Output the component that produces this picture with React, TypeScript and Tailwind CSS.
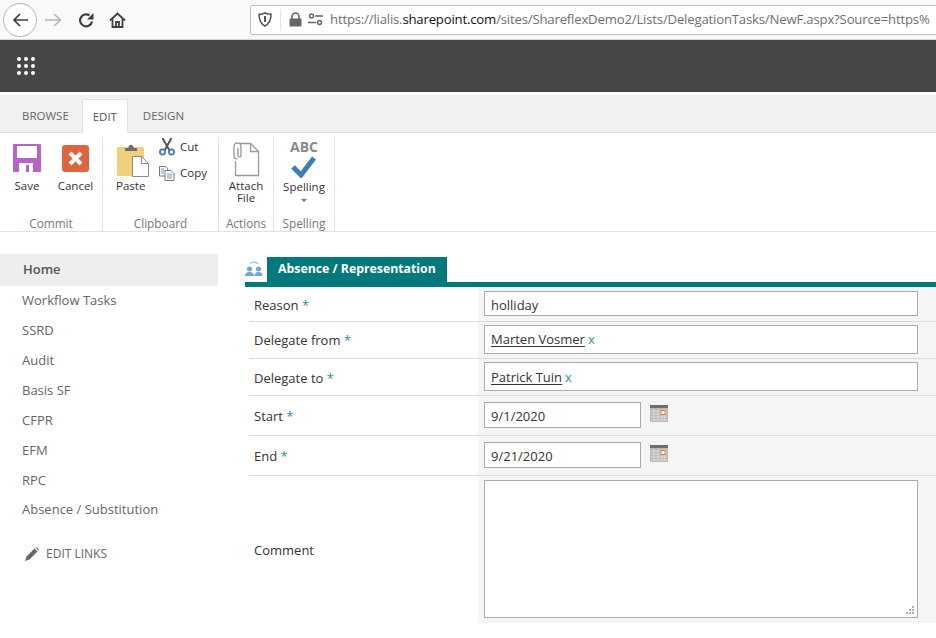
import React from "react";

const font = { fontFamily: '"Open Sans", "Noto Sans", sans-serif' };

function Back() {
  return (
    <svg className="shrink-0" width="17" height="16" viewBox="0 0 17 16" fill="none" stroke="#3c3c3c" strokeWidth="1.7">
      <path d="M16 8H2M8 2 2 8l6 6" />
    </svg>
  );
}

function Toolbar() {
  return (
    <div className="h-10 shrink-0 flex items-center bg-[#f9f9f9] border-b border-[#d8d8d8] overflow-hidden">
      <div className="ml-[3px] w-[34px] h-[34px] shrink-0 rounded-full border border-[#b4b4b4] bg-white flex items-center justify-center">
        <Back />
      </div>
      <svg className="ml-[8px] shrink-0" width="17" height="16" viewBox="0 0 17 16" fill="none" stroke="#b5b5b5" strokeWidth="1.5">
        <path d="M0 8h15.500M9 2l6.500 6-6.500 6" />
      </svg>
      <svg className="ml-[16px] shrink-0" width="16" height="16" viewBox="0 0 16 16" fill="none" stroke="#3f3f3f" strokeWidth="2.200">
        <path d="M14 9.500A6 6 0 1 1 11.500 3.400" />
        <path d="M15.500 1v6.500H9z" fill="#3f3f3f" stroke="none" />
      </svg>
      <svg className="ml-[15px] shrink-0" width="17" height="16" viewBox="0 0 17 16" fill="none" stroke="#3f3f3f" strokeWidth="1.800">
        <path d="M1 8.500 8.500 1.500 16 8.500" />
        <path d="M3.500 7v8h10V7" />
        <path d="M7 15v-5h3v5" />
      </svg>
      <div className="ml-[124px] w-[700px] h-[30px] bg-white border border-[#bdbdbd] rounded-l-[2px] flex items-center shrink-0 overflow-hidden">
        <svg className="ml-[7px] shrink-0" width="14" height="15" viewBox="0 0 14 15" fill="none" stroke="#555" strokeWidth="1.600">
          <path d="M7 1c2 1 4 1.300 6 1.300C13 8 11 12 7 14 3 12 1 8 1 2.300 3 2.300 5 2 7 1z" />
          <path d="M7 4v6" strokeWidth="2" />
        </svg>
        <div className="ml-[8px] w-px h-[22px] shrink-0 bg-[#e4e4e4]" />
        <svg className="ml-[8px] shrink-0" width="13" height="15" viewBox="0 0 13 15">
          <path d="M3 7V4.500a3.500 3.500 0 0 1 7 0V7" fill="none" stroke="#666" strokeWidth="1.600" />
          <rect x="0.500" y="6.500" width="12" height="8" rx="1" fill="#666" />
        </svg>
        <svg className="ml-[6px] shrink-0" width="15" height="13" viewBox="0 0 15 13" fill="none" stroke="#666" strokeWidth="1.500">
          <circle cx="3.500" cy="3" r="2" />
          <path d="M7 3h8M0 9.500h8" />
          <circle cx="11.500" cy="9.500" r="2" />
        </svg>
        <div className="ml-[7px] whitespace-nowrap text-[13.200px] tracking-[-0.2px] text-[#6f6f6f]">
          https://lialis.<span className="text-[#111]">sharepoint.com</span>/sites/ShareflexDemo2/Lists/DelegationTasks/NewF.aspx?Source=https%
        </div>
      </div>
    </div>
  );
}

function Header() {
  return (
    <div className="h-[52px] shrink-0 bg-[#484644] flex items-center pl-[17px]">
      <div className="grid grid-cols-3 gap-[3px]">
        {Array.from({ length: 9 }).map((_, i) => (
          <div key={i} className="w-[4px] h-[4px] rounded-full bg-white" />
        ))}
      </div>
    </div>
  );
}

function SaveIcon() {
  return (
    <svg className="shrink-0" width="28" height="28" viewBox="0 0 28 28">
      <rect width="28" height="28" rx="1" fill="#b565c9" />
      <path d="M4 2h20v12H4z" fill="#fff" />
      <path d="M6 19h14v9H6z" fill="#fff" />
      <path d="M13 21h3v7h-3z" fill="#b565c9" />
    </svg>
  );
}
function CancelIcon() {
  return (
    <svg className="shrink-0" width="27" height="27" viewBox="0 0 27 27">
      <rect width="27" height="27" rx="3" fill="#dc6540" />
      <path d="M8 8l11 11M19 8 8 19" stroke="#fff" strokeWidth="4" />
    </svg>
  );
}
function PasteIcon() {
  return (
    <svg className="shrink-0" width="32" height="34" viewBox="0 0 32 34">
      <rect x="0" y="4" width="27" height="29" rx="1.500" fill="#f0cf7d" />
      <path d="M8 8V5h3.500a2.500 2.500 0 0 1 4.500-2 2.500 2.500 0 0 1 .5 2H20v3z" fill="#6e6e6e" />
      <path d="M15.500 13.500h9l7 7v13h-16z" fill="#fff" stroke="#8a8a8a" />
      <path d="M24.500 13.500v7h7" fill="none" stroke="#8a8a8a" />
    </svg>
  );
}
function CutIcon() {
  return (
    <svg className="shrink-0" width="16" height="18" viewBox="0 0 16 18" fill="none">
      <path d="M3.500 0l7 12.500M12.500 0l-7 12.500" stroke="#555" strokeWidth="2" />
      <circle cx="3.500" cy="14" r="2.600" stroke="#3f78b5" strokeWidth="1.700" />
      <circle cx="12.500" cy="14" r="2.600" stroke="#3f78b5" strokeWidth="1.700" />
    </svg>
  );
}
function CopyIcon() {
  return (
    <svg className="shrink-0" width="16" height="16" viewBox="0 0 16 16" fill="#fff" stroke="#6a6a6a" strokeWidth="0.900">
      <path d="M.5 1.500h6l2 2V11h-8z" />
      <path d="M6 5.500h6l3 3v7H6z" />
      <path d="M8 9h5M8 11h5M8 13h5M2 4h3M2 6h3M2 8h3" stroke="#5f8fbf" />
    </svg>
  );
}
function AttachIcon() {
  return (
    <svg className="shrink-0" width="27" height="35" viewBox="0 0 27 35" fill="none">
      <path d="M2.500 4V1.500h15l8 8v24h-23V19" fill="#fff" stroke="#9a9a9a" strokeWidth="1.300" />
      <path d="M17.500 1.500v8h8" stroke="#9a9a9a" strokeWidth="1.300" />
      <path d="M4.500 17c-2.500 0-3.500-1-3.500-3V5c0-3 1.500-4 3.500-4S8 2 8 5v8.500c0 1-.6 1.500-1.400 1.500S5 14.500 5 13.500V6" stroke="#8d8d8d" strokeWidth="1.200" fill="#fff" />
    </svg>
  );
}
function CheckIcon() {
  return (
    <svg className="shrink-0" width="26" height="23" viewBox="0 0 26 23">
      <path d="M2 12l8 8L23 3" fill="none" stroke="#3e7cb4" strokeWidth="5" />
    </svg>
  );
}

function Group({ label, width, children }: { label: string; width: string; children: React.ReactNode }) {
  return (
    <div className={`${width} h-[94px] mt-[4px] border-r border-[#e1e1e1] flex flex-col shrink-0`}>
      <div className="h-[78px] relative flex">{children}</div>
      <div className="text-center text-[11.800px] leading-[16px] text-[#777] whitespace-nowrap">{label}</div>
    </div>
  );
}

function Ribbon() {
  return (
    <div className="shrink-0">
      <div className="h-[38px] mt-[3px] bg-[#f1f1f1] flex items-end border-b border-[#e1e1e1] text-[11.500px] text-[#666]">
        <div className="ml-[22px] h-[33px] flex items-center">BROWSE</div>
        <div className="ml-[13px] w-[46px] h-[34px] -mb-px bg-white border border-b-0 border-[#e1e1e1] flex items-center justify-center text-[#555]">EDIT</div>
        <div className="ml-[15px] h-[33px] flex items-center">DESIGN</div>
      </div>
      <div className="h-[99px] border-b border-[#e1e1e1] flex text-[11.500px] leading-[12px] text-[#333]">
        <Group label="Commit" width="w-[103px]">
          <div className="ml-[13px] mt-[7px] flex flex-col items-center w-[28px]">
            <SaveIcon />
            <div className="mt-[8px]">Save</div>
          </div>
          <div className="ml-[21px] mt-[8px] flex flex-col items-center w-[27px]">
            <CancelIcon />
            <div className="mt-[8px]">Cancel</div>
          </div>
        </Group>
        <Group label="Clipboard" width="w-[116px]">
          <div className="ml-[14px] mt-[6px] flex flex-col items-start w-[32px]">
            <PasteIcon />
            <div className="mt-[3px] whitespace-nowrap -ml-px">Paste</div>
          </div>
          <div className="ml-[10px] mt-[1px] flex flex-col gap-[9px]">
            <div className="flex items-center gap-[5px] h-[18px]"><CutIcon /><span>Cut</span></div>
            <div className="flex items-center gap-[5px] h-[16px]"><CopyIcon /><span>Copy</span></div>
          </div>
        </Group>
        <Group label="Actions" width="w-[55px]">
          <div className="w-full mt-[5px] flex flex-col items-center">
            <AttachIcon />
            <div className="mt-[3px] text-center">Attach<br />File</div>
          </div>
        </Group>
        <Group label="Spelling" width="w-[61px]">
          <div className="w-full flex flex-col items-center">
            <div className="mt-[2px] text-[14px] leading-[16px] font-bold text-[#8a8a8a]">ABC</div>
            <CheckIcon />
            <div className="mt-[3px]">Spelling</div>
            <div className="mt-[6px] w-0 h-0 border-x-[3px] border-x-transparent border-t-[3px] border-t-[#777]" />
          </div>
        </Group>
      </div>
    </div>
  );
}

const navItems = ["Workflow Tasks", "SSRD", "Audit", "Basis SF", "CFPR", "EFM", "RPC", "Absence / Substitution"];

function Sidebar() {
  return (
    <div className="w-[218px] shrink-0 pt-[22px] text-[13px] text-[#666]">
      <div className="h-[32px] bg-[#eeeeee] pl-[23px] flex items-center font-semibold text-[#555]">Home</div>
      {navItems.map((n) => (
        <div key={n} className="h-[29.900px] pl-[22px] flex items-center whitespace-nowrap">{n}</div>
      ))}
      <div className="mt-[14px] h-[30px] pl-[25px] flex items-center gap-[7px] text-[12px]">
        <svg className="shrink-0" width="14" height="14" viewBox="0 0 14 14">
          <path d="M0 14l1.500-4.500 8-8 3 3-8 8z" fill="#666" />
          <path d="M10.500.5l1-.5 2.500 2.500-.5 1z" fill="#666" />
        </svg>
        EDIT LINKS
      </div>
    </div>
  );
}

function Req() {
  return <span className="text-[#2a8f98]"> *</span>;
}

function Row({ label, h, labelPad, children }: { label: string; h: string; labelPad: string; children: React.ReactNode }) {
  return (
    <div className={`flex ${h}`}>
      <div className="w-[233px] pl-[4px] shrink-0">
        <div className={`h-full pl-[5px] flex items-center border-b border-[#dcdcdc] text-[13px] text-[#333] ${labelPad}`}>
          <span>{label}<Req /></span>
        </div>
      </div>
      <div className="flex-1 bg-[#f5f5f5] border-b border-[#dcdcdc] pl-[6px]">{children}</div>
    </div>
  );
}

function Box({ className, children }: { className: string; children?: React.ReactNode }) {
  return (
    <div className={`bg-white border border-[#ababab] pl-[6px] flex items-center text-[13px] text-[#333] ${className}`}>
      {children}
    </div>
  );
}

function Person({ name }: { name: string }) {
  return (
    <>
      <span className="underline underline-offset-2">{name}</span>
      <span className="ml-[3px] text-[#3b8f8f]">x</span>
    </>
  );
}

function Calendar() {
  return (
    <svg className="ml-[9px] mt-[3px] shrink-0" width="18" height="17" viewBox="0 0 18 17">
      <rect width="18" height="17" rx="1" fill="#b8b8b8" />
      <rect width="18" height="3" fill="#6e6e6e" />
      <path d="M1 6h16M1 9h16M1 12h16M1 15h16M4 4v12M8 4v12M12 4v12M15 4v12" stroke="#e4e4e4" strokeWidth="0.800" />
      <rect x="11" y="5.500" width="4" height="4" fill="#fff" stroke="#e5792a" />
    </svg>
  );
}

function Form() {
  return (
    <div className="flex-1 min-w-0 pt-[24px]">
      <div className="flex items-end h-[26px]">
        <svg className="mb-[6px] mr-[4px] shrink-0" width="18" height="15" viewBox="0 0 18 15" fill="#6ea4d8">
          <circle cx="4.500" cy="8" r="2.500" />
          <path d="M0 15c0-3 2-4 4.500-4S9 12 9 15z" />
          <circle cx="13.500" cy="8" r="2.500" />
          <path d="M9.500 15c0-3 1.500-4 4-4s4 1 4 4z" />
          <path d="M5 3c2-2.500 5-2.500 8 0" fill="none" stroke="#6ea4d8" />
        </svg>
        <div className="h-[25px] w-[180px] bg-[#04797b] text-white font-bold text-[12.300px] flex items-center pl-[11px] whitespace-nowrap">
          Absence / Representation
        </div>
      </div>
      <div className="h-[5px] bg-[#04797b]" />
      <Row label="Reason" h="h-[35px]" labelPad="pt-[4px]">
        <div className="pt-[4px]"><Box className="w-[434px] h-[25px] pt-[4px]">holliday</Box></div>
      </Row>
      <Row label="Delegate from" h="h-[37px]" labelPad="pt-[2px]">
        <div className="pt-[3px]"><Box className="w-[434px] h-[29px]"><Person name="Marten Vosmer" /></Box></div>
      </Row>
      <Row label="Delegate to" h="h-[37px]" labelPad="pt-[4px]">
        <div className="pt-[3px]"><Box className="w-[434px] h-[29px] pt-[2px]"><Person name="Patrick Tuin" /></Box></div>
      </Row>
      <Row label="Start" h="h-[40px]" labelPad="pt-[2px]">
        <div className="pt-[6px] flex items-start"><Box className="w-[157px] h-[26px] pt-[4px]">9/1/2020</Box><Calendar /></div>
      </Row>
      <Row label="End" h="h-[40px]" labelPad="pt-[2px]">
        <div className="pt-[6px] flex items-start"><Box className="w-[157px] h-[26px] pt-[4px]">9/21/2020</Box><Calendar /></div>
      </Row>
      <div className="flex h-[147px]">
        <div className="w-[233px] pl-[9px] shrink-0 flex items-center text-[13px] text-[#333] pt-[2px]">Comment</div>
        <div className="flex-1 bg-[#f5f5f5] pl-[6px] pt-[4px]">
          <div className="relative w-[434px] h-[138px] bg-white border border-[#ababab]">
            <svg className="absolute right-[3px] bottom-[3px]" width="8" height="8" viewBox="0 0 8 8" fill="#b0b0b0">
              <path d="M6 0h2v2H6zM3 3h2v2H3zM6 3h2v2H6zM0 6h2v2H0zM3 6h2v2H3zM6 6h2v2H6z" />
            </svg>
          </div>
        </div>
      </div>
    </div>
  );
}

export default function App() {
  return (
    <div className="w-[936px] h-[638px] bg-white flex flex-col overflow-hidden" style={font}>
      <Toolbar />
      <Header />
      <Ribbon />
      <div className="flex">
        <Sidebar />
        <div className="w-[27px] shrink-0" />
        <Form />
      </div>
    </div>
  );
}
